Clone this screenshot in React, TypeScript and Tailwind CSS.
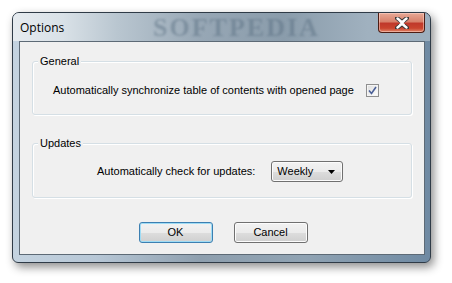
import React from 'react';

const ui = { fontFamily: '"Liberation Sans", Arial, sans-serif' };

function GroupBox({ title, children, className }: { title: string; children: React.ReactNode; className?: string }) {
  return (
    <div className={`relative rounded-[3px] border border-[#d5dfe5] shadow-[inset_1px_1px_0_#ffffff,1px_1px_0_#ffffff] ${className ?? ''}`}>
      <span className="absolute -top-[8px] left-[5px] bg-[#f0f0f0] px-[2px] text-[11px] leading-[14px] text-black">
        {title}
      </span>
      {children}
    </div>
  );
}

function Button({ label, focused }: { label: string; focused?: boolean }) {
  return (
    <button
      className={`flex h-[21px] w-[74px] items-center justify-center rounded-[3px] border bg-[linear-gradient(#f2f2f2_0%,#ebebeb_50%,#dddddd_51%,#cfcfcf_100%)] text-[11px] text-black ${
        focused
          ? 'border-[#3c7fb1] shadow-[inset_0_0_0_1px_#9fdcf5]'
          : 'border-[#707070] shadow-[inset_0_0_0_1px_#fcfcfc]'
      }`}
      style={ui}
    >
      {label}
    </button>
  );
}

export default function App() {
  return (
    <div className="h-[283px] w-[452px] overflow-hidden bg-white pl-[12px] pt-[12px]" style={ui}>
      <div className="relative flex h-[251px] w-[419px] flex-col rounded-t-[7px] rounded-b-[6px] border border-[#2f3b47] bg-[linear-gradient(90deg,#c4d3e0_0%,#b7c7d6_20%,#8e9fae_45%,#90a3b3_70%,#6f8aa3_100%)] shadow-[3px_4px_10px_rgba(0,0,0,0.45)]">
        {/* title bar */}
        <div className="relative flex h-[28px] items-start overflow-hidden rounded-t-[6px] bg-[linear-gradient(90deg,#e6ebef_0%,#d9e1e7_12%,#b9c6d0_25%,#97a7b5_45%,#8a9cab_65%,#a0b1bf_85%,#9cafbf_100%)]">
          <span className="absolute left-[140px] top-[1px] select-none text-[26px] font-bold leading-[27px] tracking-[2px] text-[#51677a] opacity-40 blur-[1px]" style={{ fontFamily: '"Liberation Serif", serif' }}>
            SOFTPEDIA
          </span>
          <span className="relative ml-[7px] mt-[7px] text-[12px] leading-[15px] text-black" style={{ fontFamily: '"Open Sans", "Noto Sans", sans-serif' }}>
            Options
          </span>
          <div className="absolute right-[5px] top-0 flex h-[20px] w-[47px] items-center justify-center rounded-b-[4px] border border-t-0 border-[#4d1d14] bg-[linear-gradient(#e8a996_0%,#d8826c_45%,#c0392b_55%,#c9442e_80%,#e0866a_100%)] shadow-[inset_0_0_0_1px_rgba(255,220,210,0.5)]">
            <svg width="14" height="12" viewBox="0 0 14 12">
              <path d="M2 1 L7 5 L12 1 M2 11 L7 7 L12 11" stroke="#3a3a3a" strokeWidth="4.2" fill="none" strokeLinecap="round" />
              <path d="M2.5 1.5 L7 5.2 L11.5 1.5 M2.5 10.5 L7 6.8 L11.5 10.5 M5 4 L9 8 M9 4 L5 8" stroke="#ffffff" strokeWidth="2.4" fill="none" strokeLinecap="round" />
            </svg>
          </div>
        </div>

        {/* client */}
        <div className="mb-[7px] ml-[6px] mr-[5px] flex flex-1 flex-col border border-[#5d6a76] bg-[#f0f0f0] px-[12px] pt-[19px]">
          <GroupBox title="General" className="h-[54px]">
            <div className="flex h-full items-center pl-[20px] pt-[4px]">
              <span className="text-[11px] text-black">Automatically synchronize table of contents with opened page</span>
              <div className="ml-[12px] flex h-[13px] w-[13px] items-center justify-center border border-[#8f8f8f] bg-[linear-gradient(135deg,#dcdcdc,#ffffff)] shadow-[inset_0_0_0_1px_#f4f4f4]">
                <svg width="9" height="9" viewBox="0 0 9 9">
                  <path d="M1 4.5 L3.5 7.5 L8 1" stroke="#4a5f97" strokeWidth="1.6" fill="none" />
                </svg>
              </div>
            </div>
          </GroupBox>

          <GroupBox title="Updates" className="mt-[28px] h-[55px]">
            <div className="flex h-full items-center pl-[64px] pt-[2px]">
              <span className="text-[11px] text-black">Automatically check for updates:</span>
              <div className="ml-[16px] flex h-[21px] w-[72px] items-center justify-between rounded-[3px] border border-[#707070] bg-[linear-gradient(#f2f2f2_0%,#ebebeb_50%,#dddddd_51%,#cfcfcf_100%)] pl-[5px] pr-[7px] shadow-[inset_0_0_0_1px_#fbfbfb]">
                <span className="text-[11px] text-black">Weekly</span>
                <svg width="7" height="4" viewBox="0 0 7 4">
                  <path d="M0 0 H7 L3.5 4 Z" fill="#000" />
                </svg>
              </div>
            </div>
          </GroupBox>

          <div className="mt-[24px] flex justify-center gap-[21px] pl-[2px]">
            <Button label="OK" focused />
            <Button label="Cancel" />
          </div>
        </div>
      </div>
    </div>
  );
}
